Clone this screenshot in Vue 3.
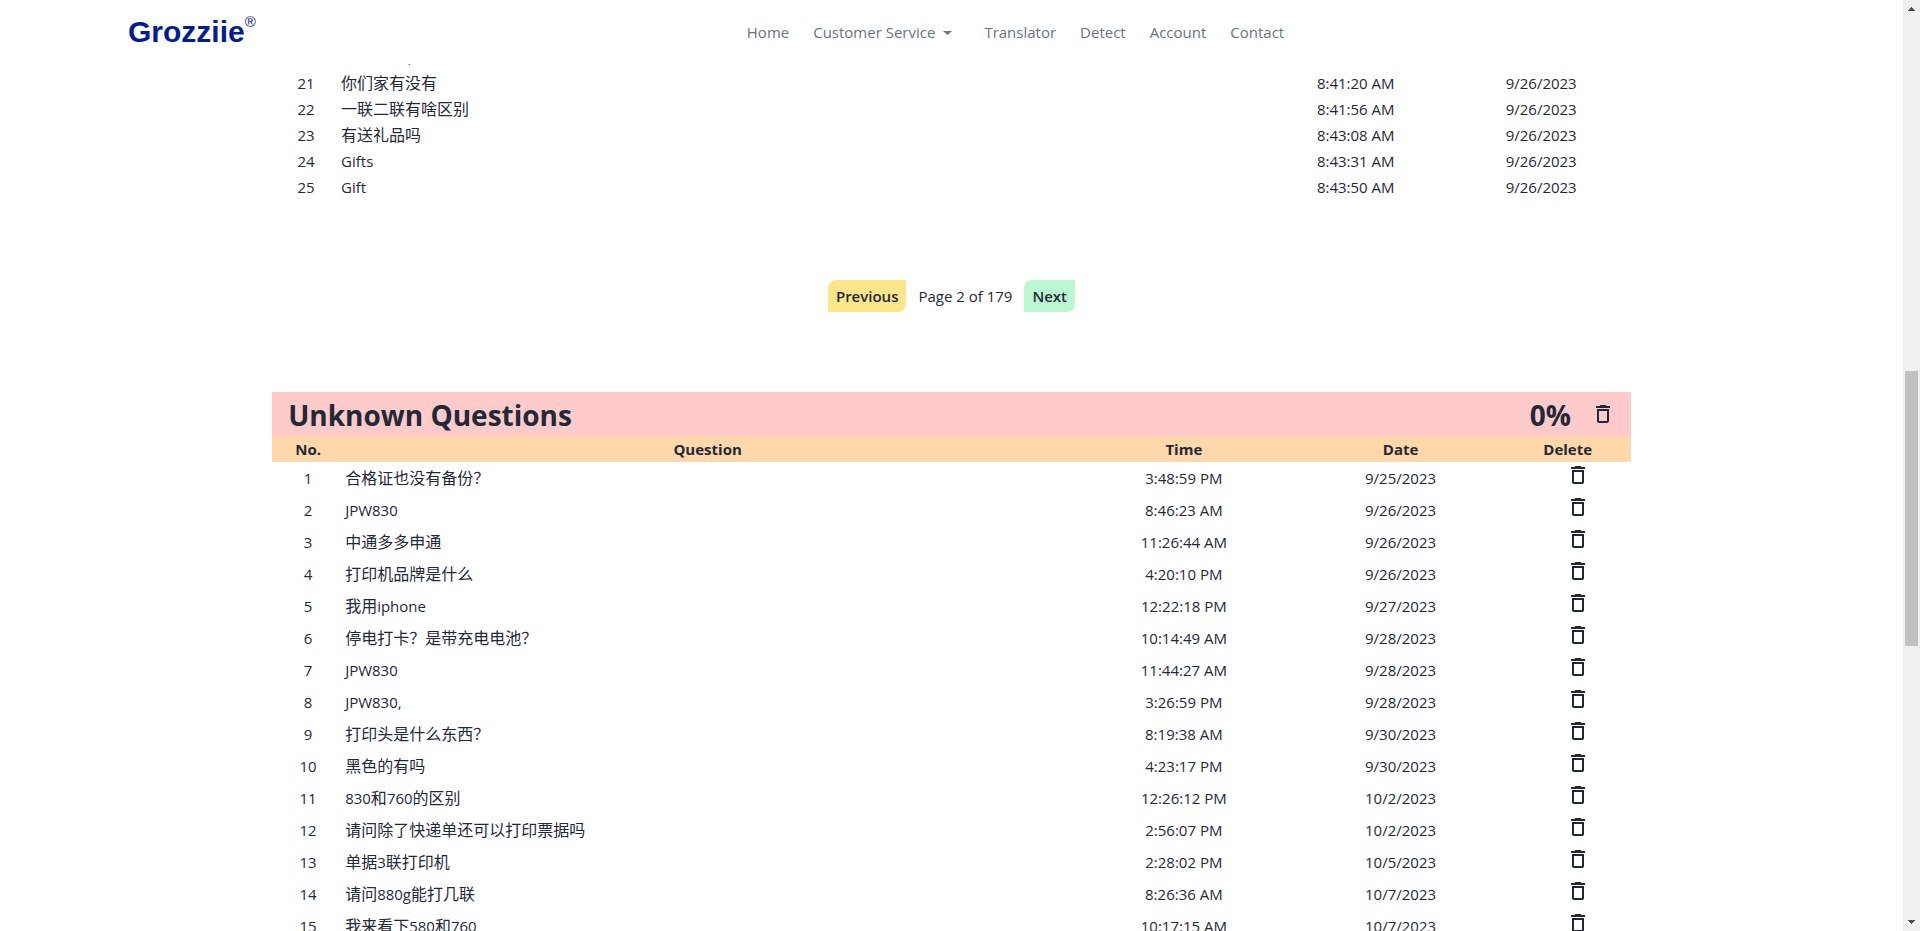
<script setup>
import { ref } from 'vue'

const links = [
  { label: 'Home' },
  { label: 'Customer Service', menu: true },
  { label: 'Translator' },
  { label: 'Detect' },
  { label: 'Account' },
  { label: 'Contact' },
]

const answered = [
  { no: 20, text: 'Gift cards,', time: '8:41:02 AM', date: '9/26/2023' },
  { no: 21, text: '你们家有没有', time: '8:41:20 AM', date: '9/26/2023' },
  { no: 22, text: '一联二联有啥区别', time: '8:41:56 AM', date: '9/26/2023' },
  { no: 23, text: '有送礼品吗', time: '8:43:08 AM', date: '9/26/2023' },
  { no: 24, text: 'Gifts', time: '8:43:31 AM', date: '9/26/2023' },
  { no: 25, text: 'Gift', time: '8:43:50 AM', date: '9/26/2023' },
]

const unknown = ref([
  { no: 1, text: '合格证也没有备份？', time: '3:48:59 PM', date: '9/25/2023' },
  { no: 2, text: 'JPW830', time: '8:46:23 AM', date: '9/26/2023' },
  { no: 3, text: '中通多多申通', time: '11:26:44 AM', date: '9/26/2023' },
  { no: 4, text: '打印机品牌是什么', time: '4:20:10 PM', date: '9/26/2023' },
  { no: 5, text: '我用iphone', time: '12:22:18 PM', date: '9/27/2023' },
  { no: 6, text: '停电打卡？是带充电电池？', time: '10:14:49 AM', date: '9/28/2023' },
  { no: 7, text: 'JPW830', time: '11:44:27 AM', date: '9/28/2023' },
  { no: 8, text: 'JPW830,', time: '3:26:59 PM', date: '9/28/2023' },
  { no: 9, text: '打印头是什么东西？', time: '8:19:38 AM', date: '9/30/2023' },
  { no: 10, text: '黑色的有吗', time: '4:23:17 PM', date: '9/30/2023' },
  { no: 11, text: '830和760的区别', time: '12:26:12 PM', date: '10/2/2023' },
  { no: 12, text: '请问除了快递单还可以打印票据吗', time: '2:56:07 PM', date: '10/2/2023' },
  { no: 13, text: '单据3联打印机', time: '2:28:02 PM', date: '10/5/2023' },
  { no: 14, text: '请问880g能打几联', time: '8:26:36 AM', date: '10/7/2023' },
  { no: 15, text: '我来看下580和760', time: '10:17:15 AM', date: '10/7/2023' },
])

// Splits a question into Chinese and Latin runs so each can carry its own size.
const runs = (text) =>
  (text.match(/[\u3000-\uffef]+|[^\u3000-\uffef]+/g) || []).map((part) => ({
    part,
    han: /[\u3000-\uffef]/.test(part),
  }))

const remove = (no) => {
  unknown.value = unknown.value.filter((row) => row.no !== no)
}
const trash = 'M16 9v10H8V9h8m-1.5-6h-5l-1 1H5v2h14V4h-3.500l-1-1zM18 7H6v12c0 1.100.9 2 2 2h8c1.100 0 2-.9 2-2V7z'
</script>

<template>
  <div class="window">
    <div class="page">
      <header class="topbar">
        <a class="logo" href="#">Grozziie<span class="mark">®</span></a>
        <nav class="nav">
          <a v-for="l in links" :key="l.label" href="#" :class="{ menu: l.menu }">
            {{ l.label }}
            <svg v-if="l.menu" width="9" height="6" viewBox="0 0 9 6" aria-hidden="true"><path d="M0 2h9L4.500 6z" fill="currentColor" /></svg>
          </a>
        </nav>
      </header>

      <main class="content">
        <table class="list answered">
          <colgroup><col class="a-no" /><col /><col class="a-time" /><col class="a-date" /></colgroup>
          <tbody>
            <tr v-for="row in answered" :key="row.no">
              <td>{{ row.no }}</td>
              <td class="question"><span v-for="(r, i) in runs(row.text)" :key="i" :class="{ han: r.han }">{{ r.part }}</span></td>
              <td>{{ row.time }}</td>
              <td>{{ row.date }}</td>
            </tr>
          </tbody>
        </table>

        <div class="pager">
          <button type="button" class="prev">Previous</button>
          <span>Page 2 of 179</span>
          <button type="button" class="next">Next</button>
        </div>

        <section>
          <div class="banner">
            <h1>Unknown Questions</h1>
            <strong>0%</strong>
            <button type="button" class="icon" aria-label="Delete all">
              <svg width="24" height="24" viewBox="0 0 24 24"><path :d="trash" fill="currentColor" /></svg>
            </button>
          </div>
          <table class="list unknown">
            <colgroup><col class="u-no" /><col /><col class="u-time" /><col class="u-date" /><col class="u-del" /></colgroup>
            <thead>
              <tr><th>No.</th><th>Question</th><th>Time</th><th>Date</th><th>Delete</th></tr>
            </thead>
            <tbody>
              <tr v-for="row in unknown" :key="row.no">
                <td>{{ row.no }}</td>
                <td class="question"><span v-for="(r, i) in runs(row.text)" :key="i" :class="{ han: r.han }">{{ r.part }}</span></td>
                <td>{{ row.time }}</td>
                <td>{{ row.date }}</td>
                <td class="action">
                  <button type="button" class="icon" :aria-label="'Delete question ' + row.no" @click="remove(row.no)">
                    <svg width="24" height="24" viewBox="0 0 24 24"><path :d="trash" fill="currentColor" /></svg>
                  </button>
                </td>
              </tr>
            </tbody>
          </table>
        </section>
      </main>
    </div>

    <div class="rail" aria-hidden="true">
      <svg width="17" height="17" viewBox="0 0 17 17" shape-rendering="crispEdges"><path d="M5 11h7v-1h-1V9h-1V8H9V7H8v1H7v1H6v1H5z" fill="#505050" /></svg>
      <div class="track"><div class="thumb"></div></div>
      <svg width="17" height="17" viewBox="0 0 17 17" shape-rendering="crispEdges"><path d="M5 6h7v1h-1v1h-1v1H9v1H8V9H7V8H6V7H5z" fill="#505050" /></svg>
    </div>
  </div>
</template>

<style>
body {
  margin: 0;
  background: #fff;
}
</style>

<style scoped>
.window {
  display: flex;
  height: 100vh;
  overflow: hidden;
  color: #1f2937;
  font: 15px/24px "Open Sans", "Noto Sans CJK SC", sans-serif;
}
.page {
  position: relative;
  flex: 1;
  overflow: hidden;
}
.topbar {
  position: absolute;
  inset: 0 0 auto;
  z-index: 1;
  display: flex;
  align-items: center;
  box-sizing: border-box;
  height: 64px;
  padding: 0 128px;
  background: #fff;
}
.logo {
  display: flex;
  align-items: flex-start;
  width: 128px;
  color: #001c94;
  font: bold 30px/44px "Liberation Sans", Arial, sans-serif;
  text-decoration: none;
}
.mark {
  font-size: 15px;
  font-weight: normal;
  line-height: 24px;
}
.nav {
  display: flex;
  flex: 1;
  justify-content: center;
  gap: 24px;
}
.nav a {
  display: flex;
  align-items: center;
  gap: 8px;
  color: #6b7280;
  text-decoration: none;
}
.nav .menu {
  margin-right: 8px;
}
.content {
  width: 71.4%;
  margin: 0 auto;
  padding-top: 44px;
}
.list {
  width: 100%;
  border-collapse: collapse;
  table-layout: fixed;
  text-align: center;
}
.list th,
.list td {
  padding: 1px;
}
.answered td {
  height: 24px;
}
.list .question {
  text-align: left;
}
.han {
  font-size: 16px;
}
.a-no { width: 5%; }
.a-time { width: 14.1%; }
.a-date { width: 13.2%; }
.u-no { width: 5.3%; }
.u-time { width: 16.6%; }
.u-date { width: 15.3%; }
.u-del { width: 9.3%; }
.pager {
  display: flex;
  justify-content: center;
  align-items: center;
  gap: 12px;
  margin: 80px 0;
}
.pager button {
  height: 32px;
  padding: 0 8px;
  border: 0;
  border-radius: 8px 0;
  color: inherit;
  font: inherit;
  font-weight: 600;
}
.prev {
  background: #fde68a;
}
.next {
  background: #bbf7d0;
}
.banner {
  display: flex;
  align-items: center;
  height: 44px;
  padding: 0 16px;
  background: #fecaca;
}
.banner h1,
.banner strong {
  margin: 0;
  font-size: 28px;
  font-weight: 700;
  line-height: 44px;
}
.banner h1 {
  padding-top: 2px;
}
.banner strong {
  margin: 0 20px 0 auto;
  padding-top: 2px;
}
.icon {
  display: block;
  width: 24px;
  height: 24px;
  padding: 0;
  border: 0;
  background: none;
  color: inherit;
}
.icon svg {
  display: block;
}
.unknown thead {
  background: #fed7aa;
}
.unknown th {
  height: 24px;
  font-weight: 700;
}
.unknown tbody td {
  height: 30px;
}
.unknown .action {
  vertical-align: top;
}
.action .icon {
  box-sizing: content-box;
  margin: 0 auto;
  padding-left: 20px;
}
.rail {
  display: flex;
  flex: none;
  flex-direction: column;
  width: 17px;
  background: #f0f0f0;
}
.track {
  display: grid;
  flex: 1;
  grid-template-rows: 354fr 275fr 268fr;
  padding: 0 2px;
}
.thumb {
  grid-row: 2;
  background: #c1c1c1;
}
</style>
